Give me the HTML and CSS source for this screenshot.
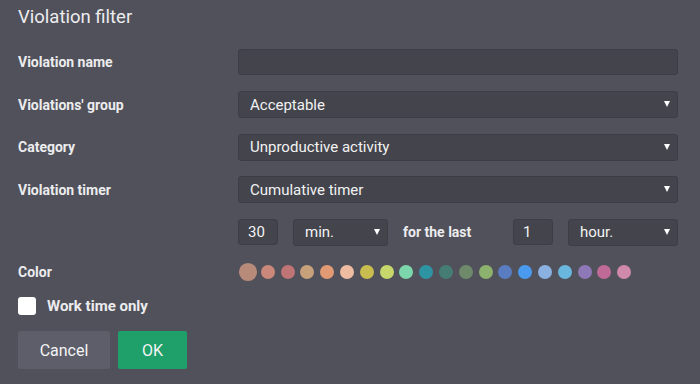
FILE: index.html
```html
<!DOCTYPE html>
<html lang="en">
<head>
    <meta charset="UTF-8">
    <meta name="viewport" content="width=device-width, initial-scale=1.0">
    <title>Violation filter</title>
    <link rel="stylesheet" href="styles.css">
</head>
<body>
    <div class="dialog">
        <h1 class="title">Violation filter</h1>

        <div class="form">
            <label class="label" for="vname">Violation name</label>
            <input class="field" id="vname" type="text">

            <label class="label" for="vgroup">Violations' group</label>
            <div class="select">
                <select id="vgroup"><option>Acceptable</option></select>
                <span class="caret"></span>
            </div>

            <label class="label" for="vcat">Category</label>
            <div class="select">
                <select id="vcat"><option>Unproductive activity</option></select>
                <span class="caret"></span>
            </div>

            <label class="label" for="vtimer">Violation timer</label>
            <div class="select">
                <select id="vtimer"><option>Cumulative timer</option></select>
                <span class="caret"></span>
            </div>

            <span></span>
            <div class="timer-row">
                <input class="field small" type="text" value="30">
                <div class="select min">
                    <select><option>min.</option></select>
                    <span class="caret"></span>
                </div>
                <span class="for-last">for the last</span>
                <input class="field small" type="text" value="1">
                <div class="select hour">
                    <select><option>hour.</option></select>
                    <span class="caret"></span>
                </div>
            </div>

            <span class="label">Color</span>
            <div class="colors" id="colors"></div>
        </div>

        <label class="check">
            <input type="checkbox">
            <span class="box"></span>
            Work time only
        </label>

        <div class="buttons">
            <button class="btn cancel">Cancel</button>
            <button class="btn ok">OK</button>
        </div>
    </div>
    <script>
        const colors = ['#b88a79', '#c9887a', '#bf7476', '#c7a07c', '#e29a74', '#eebca1', '#c8bd4e', '#c7d76c',
            '#7dd7ad', '#2e94a3', '#467d72', '#6f896b', '#8cb26d', '#5a7dc2', '#4a9bf0', '#8bb1e0',
            '#69b7dc', '#8f78b7', '#c06a97', '#cf89ad'];

        const box = document.getElementById('colors');
        colors.forEach((c, i) => {
            const dot = document.createElement('span');
            dot.className = i === 0 ? 'dot active' : 'dot';
            dot.style.background = c;
            box.appendChild(dot);
        });
    </script>
</body>
</html>
```

FILE: styles.css
```css
body {
    margin: 0;
    background: #50515a;
    color: #ececee;
    font-family: Roboto, "Liberation Sans", sans-serif;
}
.dialog {
    padding: 0 22px 0 18px;
}
.title {
    margin: 0;
    height: 34px;
    line-height: 35px;
    font-size: 18.5px;
    font-weight: normal;
}
.form {
    margin-top: 15px;
    display: grid;
    grid-template-columns: 220px 440px;
    grid-template-rows: repeat(5, 26.5px) 20px;
    row-gap: 16px;
    align-items: center;
}
.label {
    font-size: 14px;
    font-weight: bold;
}
.field {
    box-sizing: border-box;
    height: 26px;
    margin: 0;
    padding: 0 9px;
    background: #43444c;
    border: 1px solid #3d3e45;
    border-radius: 3px;
    color: #f2f2f2;
    font-family: inherit;
    font-size: 15px;
    outline: none;
}
.select {
    position: relative;
    height: 27px;
}
.select select {
    -webkit-appearance: none;
    appearance: none;
    box-sizing: border-box;
    width: 100%;
    height: 27px;
    margin: 0;
    padding: 0 24px 0 11px;
    background: #43444c;
    border: 1px solid #3d3e45;
    border-radius: 3px;
    color: #f2f2f2;
    font-family: inherit;
    font-size: 15px;
    outline: none;
}
.caret {
    position: absolute;
    right: 8px;
    top: 10px;
    border-left: 3px solid transparent;
    border-right: 3px solid transparent;
    border-top: 6px solid #ffffff;
}
.timer-row {
    display: flex;
    align-items: center;
    gap: 15px;
}
.field.small {
    width: 40px;
}
.select.min {
    width: 95px;
}
.select.hour {
    width: 110px;
}
.for-last {
    width: 95px;
    font-size: 14px;
    font-weight: bold;
}
.colors {
    display: flex;
    align-items: center;
    gap: 5.8px;
    padding-left: 3px;
}
.dot {
    width: 14px;
    height: 14px;
    border-radius: 50%;
}
.dot.active {
    transform: scale(1.3);
}
.check {
    display: flex;
    align-items: center;
    margin-top: 15.5px;
    height: 18px;
    font-size: 15px;
    font-weight: bold;
}
.check input {
    display: none;
}
.box {
    width: 18px;
    height: 18px;
    margin-right: 11px;
    background: #ffffff;
    border-radius: 3px;
}
.buttons {
    display: flex;
    gap: 8px;
    margin-top: 16px;
}
.btn {
    height: 38px;
    border: none;
    border-radius: 2px;
    color: #f4f4f4;
    font-family: inherit;
    font-size: 16px;
}
.cancel {
    width: 92px;
    background: #5d5e6a;
}
.ok {
    width: 69px;
    background: #1fa06b;
}
```
